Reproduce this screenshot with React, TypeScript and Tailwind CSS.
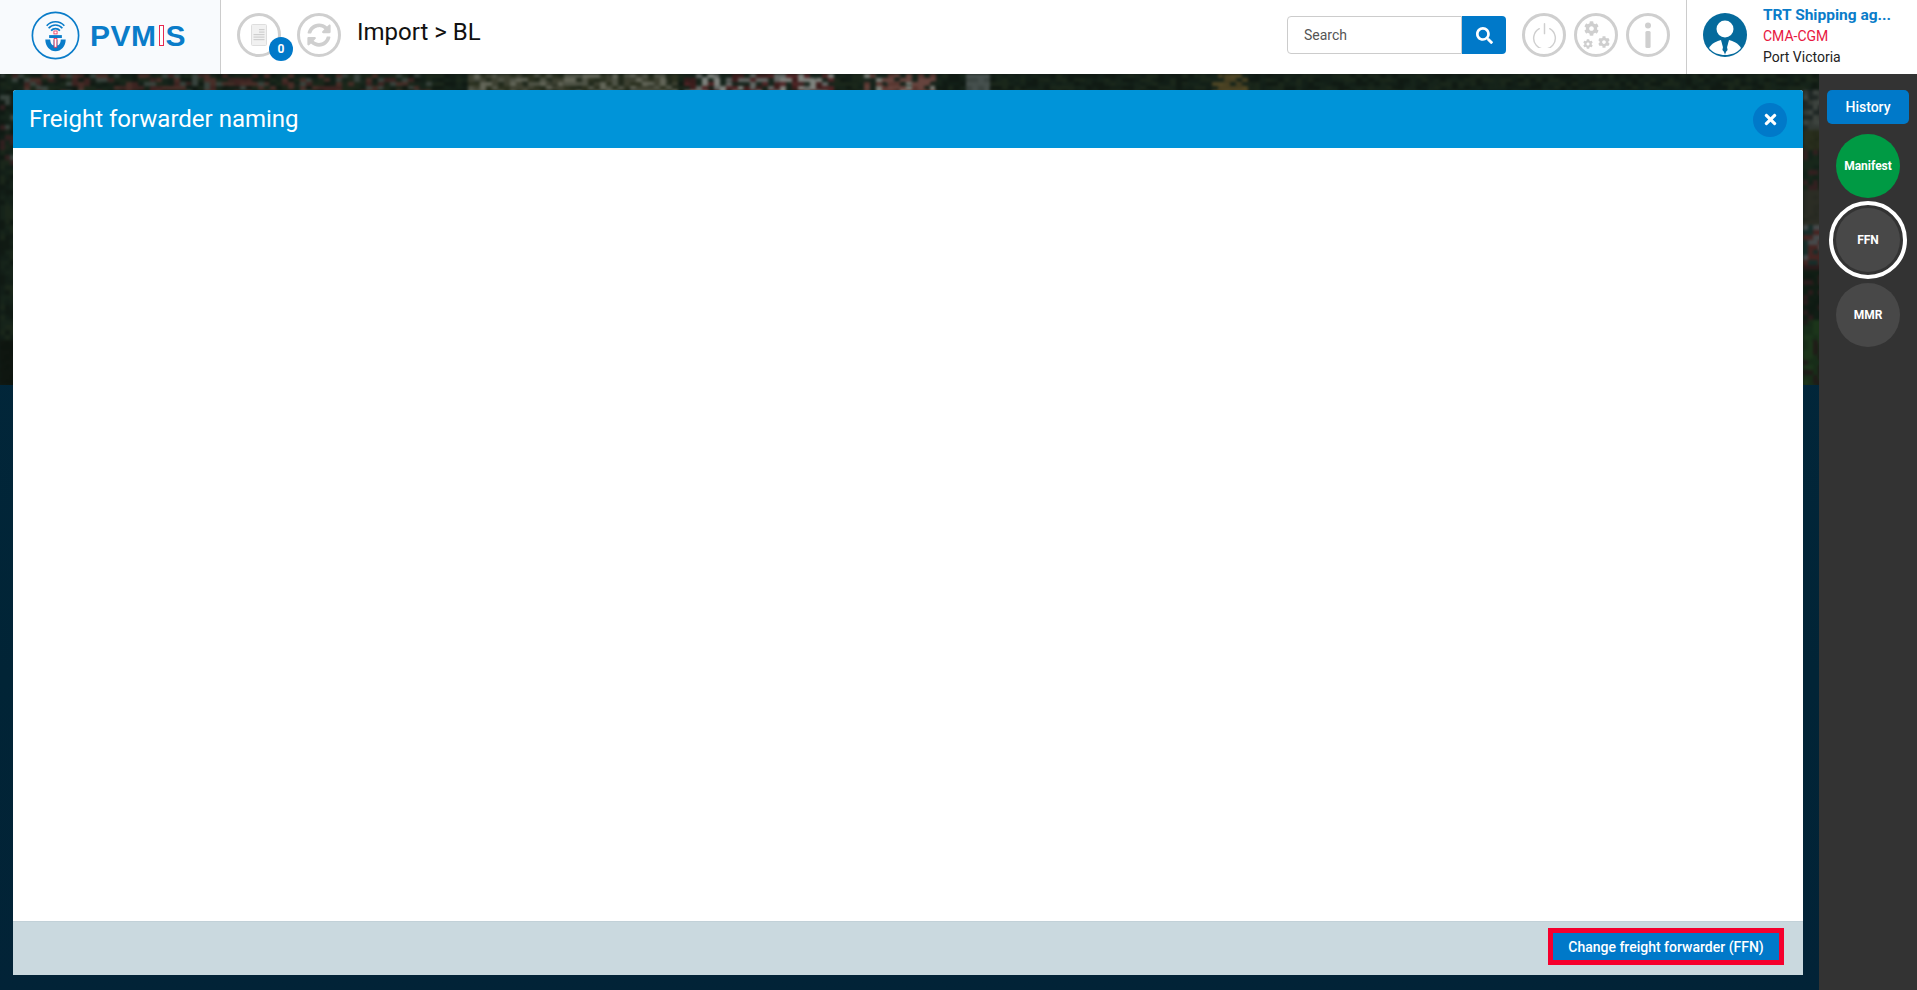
import React from "react";
import { FaSearch, FaCog, FaSyncAlt, FaTimes } from "react-icons/fa";

const CircleButton = ({ children }: { children: React.ReactNode }) => (
  <div className="w-11 h-11 rounded-full border-[3px] border-[#cfcfcf] flex items-center justify-center text-[#cfcfcf] shrink-0">
    {children}
  </div>
);

const Logo = () => (
  <svg viewBox="0 0 50 50" className="w-[49px] h-[49px] shrink-0">
    <circle cx="25" cy="25" r="23.6" fill="none" stroke="#0a7cc9" strokeWidth="1.7" />
    <path d="M16 15a12 12 0 0 1 18 0" fill="none" stroke="#0a7cc9" strokeWidth="1.7" />
    <path d="M18 17.6a9 9 0 0 1 14 0" fill="none" stroke="#0a7cc9" strokeWidth="1.7" />
    <path d="M20.5 20a6 6 0 0 1 9 0" fill="none" stroke="#0a7cc9" strokeWidth="1.7" />
    <rect x="23.4" y="20.4" width="3.2" height="3" fill="#fff" stroke="#e8284f" strokeWidth="0.8" />
    <rect x="18.5" y="24.6" width="13" height="3" fill="#0a7cc9" />
    <path d="M14.6 29h5c.2 3.8 1.6 5.6 3.4 6.2V29h4v6.2c1.8-.6 3.2-2.4 3.4-6.2h5c0 7-4.8 12-10.4 12S14.6 36 14.6 29z" fill="#0a7cc9" />
    <rect x="23.6" y="28" width="2.8" height="9" fill="#fff" stroke="#e8284f" strokeWidth="0.8" />
  </svg>
);

const DocIcon = () => (
  <svg viewBox="0 0 16 22" className="w-4 h-[22px]">
    <rect x="0.5" y="0.5" width="15" height="21" rx="1" fill="#f1f1f1" stroke="#dedede" />
    <rect x="8" y="5" width="5.5" height="1.2" fill="#cfcfcf" />
    <rect x="8" y="7.5" width="5.5" height="1.2" fill="#cfcfcf" />
    <rect x="2.5" y="10" width="11" height="1.2" fill="#cfcfcf" />
    <rect x="2.5" y="12.5" width="11" height="1.2" fill="#cfcfcf" />
    <rect x="2.5" y="15" width="11" height="1.2" fill="#cfcfcf" />
  </svg>
);

const PowerIcon = () => (
  <svg viewBox="0 0 24 24" fill="none" stroke="#cfcfcf" strokeWidth="1.4" strokeLinecap="round" className="w-[25px] h-[25px]">
    <path d="M7 5.5a10.4 10.4 0 1 0 10 0" />
    <path d="M12 0.8v9.4" />
  </svg>
);

const GearsIcon = () => (
  <div className="relative w-7 h-7">
    <FaCog className="absolute left-[2px] top-0 text-[15px]" />
    <FaCog className="absolute left-[1px] bottom-0 text-[10px]" />
    <FaCog className="absolute right-0 bottom-[1px] text-[12px]" />
  </div>
);

const InfoIcon = () => (
  <svg viewBox="0 0 8 26" className="w-2 h-[26px]" fill="#cfcfcf">
    <circle cx="4" cy="3.5" r="3" />
    <rect x="1.4" y="9" width="5.2" height="17" rx="1.5" />
  </svg>
);

const AvatarIcon = () => (
  <svg viewBox="0 0 44 44" className="w-11 h-11 shrink-0">
    <circle cx="22" cy="22" r="22" fill="#056a9c" />
    <circle cx="22" cy="16" r="8.5" fill="#fff" />
    <path d="M6 35c3-5 8-7 12-8l4 15c-6 0-12-2-16-7z" fill="#fff" />
    <path d="M38 35c-3-5-8-7-12-8l-4 15c6 0 12-2 16-7z" fill="#fff" />
    <path d="M20.4 26h3.2l-.6 3 1.6 8-2.6 3-2.6-3 1.6-8z" fill="#056a9c" />
  </svg>
);

const SideCircle = ({ label, className }: { label: string; className: string }) => (
  <div className={`w-16 h-16 rounded-full flex items-center justify-center text-white text-[12px] font-bold ${className}`}>
    {label}
  </div>
);

// the blurred town photo only shows in a thin strip round the modal
function makeRandom(seed: number) {
  return () => {
    seed = (seed + 0x6d2b79f5) | 0;
    let t = Math.imul(seed ^ (seed >>> 15), 1 | seed);
    t = (t + Math.imul(t ^ (t >>> 7), 61 | t)) ^ t;
    return ((t ^ (t >>> 14)) >>> 0) / 4294967296;
  };
}

const DARK = ["#14221a", "#1a2a1e", "#101a13", "#22301f"];

function topPalette(x: number) {
  if (x >= 466 && x < 676) return ["#5b5a45", "#7a7a68", "#3d4028", "#9a9886", "#2c3320"];
  if (x >= 683 && x < 830) return ["#1a2a20", "#7a2a30", "#9a9a9a", "#5b1f22", "#c8c8c4"];
  if (x >= 861 && x < 931) return ["#1a2a20", "#8a4a44", "#a0605a", "#c0c0b8"];
  if (x >= 963 && x < 989) return ["#6a7474", "#56605f"];
  if (x >= 1212 && x < 1244) return ["#6e5a2c", "#7a6430", "#1a2a1e"];
  if (x < 430) return [...DARK, "#5b2a2a", "#6e3b35", "#55605a"];
  return DARK;
}

function sidePalette(y: number) {
  if (y < 16) return ["#1c2424", "#22302e"];
  if (y < 56) return ["#4a4e4a", "#2a3030", "#5c605c"];
  if (y < 76) return ["#3a3c22", "#34361e"];
  if (y < 116) return ["#15281c", "#4a2428", "#1d301f"];
  if (y < 151) return ["#3e3a30", "#38352c"];
  if (y < 191) return ["#6a6a70", "#6a2c2c", "#1c3a38"];
  if (y < 246) return ["#0e1a12", "#3c1c20", "#101f14"];
  return ["#1d3a1c", "#2a1c1a", "#24481f"];
}

function buildPatches() {
  const rand = makeRandom(7);
  const patches: { x: number; y: number; w: number; h: number; fill: string }[] = [];
  const pick = (list: string[]) => list[Math.floor(rand() * list.length)];
  for (let x = 0; x < 1819; x += 6) {
    for (let y = 0; y < 18; y += 4) {
      patches.push({ x, y, w: 5 + rand() * 9, h: 3 + rand() * 4, fill: pick(topPalette(x)) });
    }
  }
  for (let y = 16; y < 311; y += 5) {
    for (let x = 0; x < 14; x += 5) {
      const leftColors = y < 90 ? [...DARK, "#4a2428", "#55605a"] : y < 266 ? DARK : ["#0c120c", "#0f140e"];
      patches.push({ x, y, w: 6 + rand() * 4, h: 4 + rand() * 5, fill: pick(leftColors) });
    }
    for (let x = 1803; x < 1819; x += 5) {
      patches.push({ x, y, w: 6 + rand() * 4, h: 4 + rand() * 5, fill: pick(sidePalette(y)) });
    }
  }
  return patches;
}

const patches = buildPatches();

const TownPhoto = () => (
  <svg width="1819" height="311" viewBox="0 0 1819 311" className="absolute left-0 top-0">
    <rect width="1819" height="311" fill="#101a14" />
    <g opacity="0.6" className="blur-[1.5px]">
      {patches.map((p, i) => (
        <rect key={i} x={p.x} y={p.y} width={p.w} height={p.h} fill={p.fill} />
      ))}
    </g>
  </svg>
);

export default function App() {
  return (
    <div className="w-[1917px] h-[990px] flex flex-col overflow-hidden font-['Roboto',sans-serif]">
      <header className="h-[74px] bg-white flex items-stretch shrink-0 relative z-10">
        <div className="w-[221px] bg-[#f8fafd] border-r border-[#cccccc] flex items-center pl-[31px] pb-[3px] gap-[10px] shrink-0">
          <Logo />
          <span className="text-[30px] font-bold tracking-[0.5px] text-[#0a7cc9] font-['Liberation_Sans',sans-serif] leading-none">
            PVM
            <span className="inline-block align-baseline w-[5px] h-[21px] mx-[2px] bg-white border border-[#e8284f]" />
            S
          </span>
        </div>
        <div className="flex items-center pl-[16px] pb-[4px] flex-1">
          <div className="relative">
            <CircleButton>
              <DocIcon />
            </CircleButton>
            <span className="absolute left-[32px] top-[24px] w-6 h-6 rounded-full bg-[#0079c9] text-white text-[12px] font-bold flex items-center justify-center">
              0
            </span>
          </div>
          <div className="ml-[16px]">
            <CircleButton>
              <FaSyncAlt className="text-[24px]" />
            </CircleButton>
          </div>
          <h1 className="ml-[16px] text-[24px] text-[#111111] leading-none mb-[6px]">Import &gt; BL</h1>
        </div>
        <div className="flex items-center pb-[4px] shrink-0">
          <div className="flex w-[219px] h-[38px]">
            <div className="flex-1 border border-[#cccccc] rounded-l-[4px] flex items-center pl-[16px] text-[14px] text-[#555555]">
              Search
            </div>
            <div className="w-11 bg-[#0079c9] rounded-r-[4px] flex items-center justify-center text-white text-[17px]">
              <FaSearch />
            </div>
          </div>
          <div className="flex gap-[8px] ml-4">
            <CircleButton>
              <PowerIcon />
            </CircleButton>
            <CircleButton>
              <GearsIcon />
            </CircleButton>
            <CircleButton>
              <InfoIcon />
            </CircleButton>
          </div>
        </div>
        <div className="w-[231px] ml-[16px] border-l border-[#cccccc] flex items-center pl-[16px] pb-[4px] gap-[16px] shrink-0">
          <AvatarIcon />
          <div className="w-[138px] self-start pt-[4px]">
            <div className="text-[15.5px] leading-[22px] font-bold text-[#0a7cc9] whitespace-nowrap">TRT Shipping ag...</div>
            <div className="text-[14px] leading-[21px] text-[#e8173f]">CMA-CGM</div>
            <div className="text-[14px] leading-[21px] text-[#222222]">Port Victoria</div>
          </div>
        </div>
      </header>

      <div className="flex-1 flex min-h-0">
        <main className="relative overflow-hidden flex-1 pl-[13px] pr-[16px] pt-[16px] pb-[15px] bg-[linear-gradient(180deg,#02283d_0px,#012436_600px,#022337_916px)]">
          <TownPhoto />
          <div className="relative h-full flex flex-col bg-white rounded-t-[3px]">
            <div className="h-[58px] bg-[#0094d9] rounded-t-[3px] flex items-center justify-between pl-[16px] pr-[16px] shrink-0">
              <h2 className="text-[24px] text-white leading-none">Freight forwarder naming</h2>
              <button className="w-[34px] h-[34px] rounded-full bg-[#0079c9] text-white flex items-center justify-center text-[17px] mt-[1px]">
                <FaTimes />
              </button>
            </div>
            <div className="flex-1" />
            <div className="h-[54px] bg-[#cad9df] border-t border-[#c2d1d8] flex items-start justify-end pr-[19px] pt-[6px] shrink-0">
              <button className="w-[236px] h-[37px] bg-[#0079c9] border-[5px] border-[#f5002d] pt-[1px] text-white text-[14px] font-medium">
                Change freight forwarder (FFN)
              </button>
            </div>
          </div>
        </main>
        <aside className="w-[98px] bg-[#333333] flex flex-col items-center pt-[16px] shrink-0">
          <div className="w-[82px] h-[34px] rounded-[5px] bg-[#0079c9] text-white text-[14px] font-medium flex items-center justify-center">
            History
          </div>
          <SideCircle label="Manifest" className="bg-[#009a44] mt-[10px]" />
          <div className="w-[78px] h-[78px] rounded-full border-[4px] border-white flex items-center justify-center mt-[3px]">
            <SideCircle label="FFN" className="bg-[#484848] shrink-0" />
          </div>
          <SideCircle label="MMR" className="bg-[#484848] mt-[4px]" />
        </aside>
      </div>
    </div>
  );
}
